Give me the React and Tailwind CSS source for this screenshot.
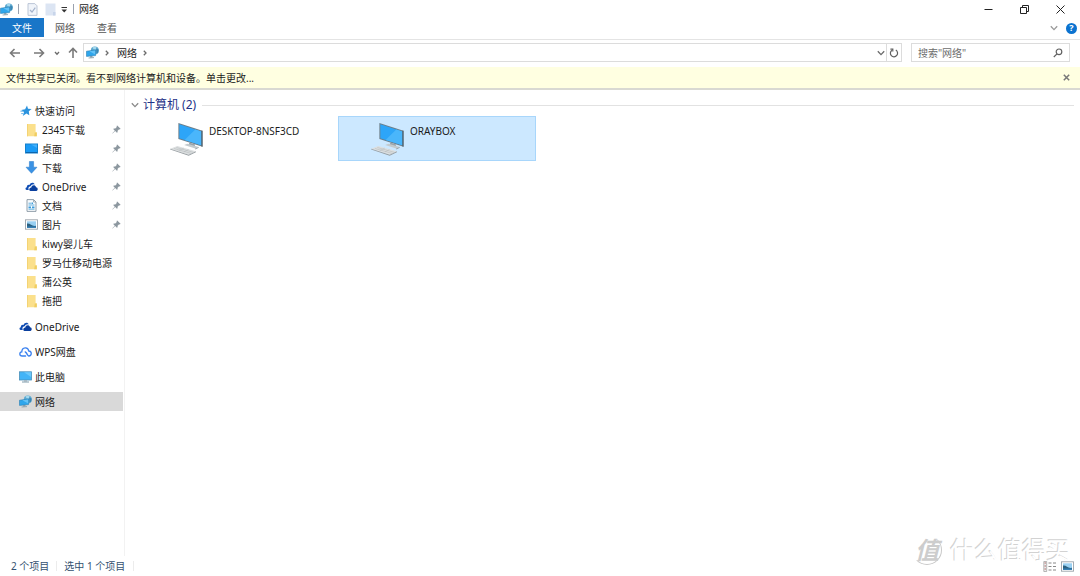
import React from "react";

const PinIcon = () => (
  <svg width="9" height="9" viewBox="0 0 9 9" aria-hidden="true">
    <path d="M5.2 0.4 8.6 3.8 7.8 4.4 7.1 4.2 5.6 5.8 5.6 7.2 4.9 7.8 3.2 6.1 0.6 8.6 0.3 8.3 2.8 5.7 1.2 4.1 1.9 3.4 3.3 3.4 4.8 1.9 4.6 1.1Z" fill="#8c979f" />
  </svg>
);

const StarIcon = () => (
  <svg width="12" height="12" viewBox="0 0 12 12" aria-hidden="true">
    <path d="M7 0.6 8 3.8 11.6 4.1 8.8 6.3 9.3 10.2 6.4 8.4 2.8 11 4 7 1.2 4.9 5.1 4.2Z" fill="#2b93de" />
    <path d="M0.4 6.2H3M1.2 8.6H3.4" stroke="#6bb6ea" strokeWidth="1" />
  </svg>
);

const FolderIcon = () => (
  <svg width="13" height="14" viewBox="0 0 13 14" aria-hidden="true">
    <path d="M2 1H10.6V9.2H11.8V13.2H2Z" fill="#fbe08c" />
    <path d="M2 1H3V13.2H2Z" fill="#f4d374" />
    <path d="M9.8 9.4H11.8V13.2H9.2Z" fill="#f0cd62" />
  </svg>
);

const DesktopIcon = () => (
  <svg width="13" height="11" viewBox="0 0 13 11" aria-hidden="true">
    <rect x="0.5" y="1" width="12" height="9" fill="#1a9af5" stroke="#1580cc" />
    <path d="M6 1.5H12V5Z" fill="#43b0fa" />
    <path d="M1 9.5H12" stroke="#0e65ac" />
  </svg>
);

const DownloadIcon = () => (
  <svg width="13" height="13" viewBox="0 0 13 13" aria-hidden="true">
    <path d="M4.4 0.5H8.6V6.2H12L6.5 12.3 1 6.2H4.4Z" fill="#3a92e4" stroke="#2679c9" strokeWidth="0.5" />
  </svg>
);

const OneDriveIcon = () => (
  <svg width="13" height="11" viewBox="0 0 13 11" aria-hidden="true">
    <path d="M1.6 9C0.1 8.8 0 6.5 1.8 6.2 1.8 4.3 3.4 3.5 4.6 4 5.3 1.4 8.8 0.9 9.8 3.4 7.6 3 6.2 4 5.7 5.3 3.6 5.1 2.9 7.5 3.8 9Z" fill="#0f4db4" />
    <path d="M5.4 9.9C3.7 9.6 3.9 6.6 6.3 6.5 6.8 3.8 10.3 3.6 11 6.3 13.2 6.4 13.2 9.6 11.4 9.9Z" fill="#0a3f9e" />
  </svg>
);

const WpsIcon = () => (
  <svg width="13" height="12" viewBox="0 0 13 12" aria-hidden="true">
    <path d="M6.6 10H3.2C0 10 0.2 6 2.8 5.8 2.9 0.6 9.3 0.6 9.7 5 13.2 5.2 13 10 9.8 10 8 9.6 8.6 7.4 6.2 5.9" fill="none" stroke="#3b82f0" strokeWidth="1.3" strokeLinecap="round" />
  </svg>
);

const DocumentIcon = () => (
  <svg width="13" height="13" viewBox="0 0 13 13" aria-hidden="true">
    <path d="M2 0.6H8.6L11 3V12.4H2Z" fill="#f8fbfd" stroke="#8795a1" strokeWidth="0.9" />
    <path d="M8.5 0.8V3H11" fill="none" stroke="#8795a1" strokeWidth="0.7" />
    <path d="M3.5 4.2H6M3.5 6H9.5M3.5 10.2H9.5" stroke="#58a8dc" strokeWidth="0.9" />
    <path d="M3.5 7.4H6V9.2H3.5ZM7 7.4H9.5V9.2H7ZM6.5 3.4H8V5H6.5Z" fill="#3b9bdb" />
  </svg>
);

const PictureIcon = () => (
  <svg width="13" height="11" viewBox="0 0 13 11" aria-hidden="true">
    <rect x="0.5" y="0.8" width="12" height="9.4" fill="#fff" stroke="#9aa3aa" strokeWidth="0.9" />
    <rect x="2" y="2.3" width="9" height="6.4" fill="#9ad0f2" />
    <path d="M2 4.6Q4 4.2 6 5.8T11 6.8V8.7H2Z" fill="#2c6180" />
    <path d="M2 7.5H11V8.7H2Z" fill="#2f80bd" />
  </svg>
);

const ThisPcIcon = () => (
  <svg width="13" height="12" viewBox="0 0 13 12" aria-hidden="true">
    <rect x="0.5" y="0.8" width="12" height="8.2" fill="#43b4f7" stroke="#4a8fb8" strokeWidth="0.8" />
    <path d="M5 1.2H12.1V6Z" fill="#6cc8fb" />
    <path d="M5 9.2H8V10.5H5Z" fill="#a6b4bd" />
    <path d="M3 11H10" stroke="#7f9bab" />
  </svg>
);

const NetworkIcon = () => (
  <svg width="13" height="13" viewBox="0 0 13 13" aria-hidden="true">
    <circle cx="8.8" cy="4.4" r="4" fill="#5fa9cf" />
    <path d="M6.4 1.6Q8.6 0.2 10.6 1.4L9.6 3.6 7.6 3.2Z" fill="#a5d9ee" />
    <path d="M10.2 2.6 12.6 3.4 12.2 6.4 10.4 7.6Z" fill="#3a86b4" />
    <path d="M0.5 5.2 9.6 4V9.6L0.5 10.4Z" fill="#2ea6ec" stroke="#2b7fb2" strokeWidth="0.6" />
    <path d="M3.4 5.2 9.2 4.4V8.4Z" fill="#62c2f7" />
    <path d="M4 10.3 6.4 10.1V11.4H4Z" fill="#7d97a6" />
    <path d="M2.6 12 8 11.6" stroke="#8ba0ad" strokeWidth="0.9" />
  </svg>
);

const ComputerIcon = () => (
  <svg width="35" height="35" viewBox="0 0 36 36" aria-hidden="true">
    <path d="M8.6 1 33.4 9V25.4L8.6 17.6Z" fill="#6c7f8b" />
    <path d="M9.6 2.4 32.2 9.8V23.8L9.6 16.8Z" fill="#2da5f8" />
    <path d="M26 7.8 32.2 9.8V23.8L15 18.5Z" fill="#4ab6fb" />
    <path d="M32.4 8.7 33.4 9V25.4L32.4 25.1Z" fill="#46525a" />
    <path d="M20 21.2 26 23.1 25 25.6 19 24Z" fill="#9ba5ab" />
    <path d="M14.5 23.6 18 22.4 29.5 25.7 26 27.3Z" fill="#c3cacd" />
    <path d="M26 27.3 29.5 25.7V26.6L26 28.2Z" fill="#929b9f" />
    <path d="M0.2 27.4 7.6 24.6 26.6 30 19.2 33.8Z" fill="#dcdfe0" />
    <path d="M0.2 27.4V28.3L19.2 34.7 26.6 31V30L19.2 33.8Z" fill="#969da1" />
    <path d="M4 27.2 22 32.4M6.5 26.2 24 31.2M9 29.4 14.2 26.9M14.2 30.9 19 28.3" stroke="#b6bbbd" strokeWidth="0.6" />
  </svg>
);

const ArrowIcon = ({ d }) => (
  <svg width="12" height="12" viewBox="0 0 12 12" fill="none" stroke="#7a7a7a" strokeWidth="1.6" aria-hidden="true">
    <path d={d} />
  </svg>
);

const Chevron = ({ d, color = "#6b6b6b" }) => (
  <svg width="8" height="8" viewBox="0 0 8 8" fill="none" stroke={color} strokeWidth="1.3" aria-hidden="true">
    <path d={d} />
  </svg>
);

const DOWN = "M0.8 2.2 4 5.6 7.2 2.2";
const SMALL_DOWN = "M2 3 4 5.2 6 3";
const RIGHT = "M2.8 1.8 5 4 2.8 6.2";

const quickAccess = [
  { label: "2345下载", Icon: FolderIcon, pinned: true },
  { label: "桌面", Icon: DesktopIcon, pinned: true },
  { label: "下载", Icon: DownloadIcon, pinned: true },
  { label: "OneDrive", Icon: OneDriveIcon, pinned: true },
  { label: "文档", Icon: DocumentIcon, pinned: true },
  { label: "图片", Icon: PictureIcon, pinned: true },
  { label: "kiwy婴儿车", Icon: FolderIcon },
  { label: "罗马仕移动电源", Icon: FolderIcon },
  { label: "蒲公英", Icon: FolderIcon },
  { label: "拖把", Icon: FolderIcon },
];

const roots = [
  { label: "OneDrive", Icon: OneDriveIcon },
  { label: "WPS网盘", Icon: WpsIcon },
  { label: "此电脑", Icon: ThisPcIcon },
  { label: "网络", Icon: NetworkIcon, active: true },
];

const computers = [
  { name: "DESKTOP-8NSF3CD" },
  { name: "ORAYBOX", selected: true },
];

const TitleBar = () => (
  <header className="flex h-[18px] items-center justify-between">
    <div className="flex items-center">
      <NetworkIcon />
      <span className="ml-[5px] h-2.5 w-px bg-gray-400" />
      <button aria-label="属性" className="ml-2">
        <svg width="11" height="13" viewBox="0 0 11 13">
          <path d="M1 0.6H7.8L10 2.8V12.4H1Z" fill="#f0f4fa" stroke="#b5c1d2" strokeWidth="0.9" />
          <path d="M3 7 5 9 8.3 4.6" fill="none" stroke="#a3b2cb" strokeWidth="1.2" />
        </svg>
      </button>
      <button aria-label="新建文件夹" className="ml-[7px]">
        <svg width="11" height="13" viewBox="0 0 11 13">
          <path d="M0.5 0.5H10.5V12.5H0.5Z" fill="#dce5f3" />
          <path d="M8 9H10.5V12.5H8Z" fill="#c8d5ea" />
        </svg>
      </button>
      <button aria-label="自定义快速访问工具栏" className="ml-1">
        <svg width="8" height="8" viewBox="0 0 8 8">
          <path d="M1.5 2.5H7" stroke="#333" />
          <path d="M1.5 4.4H7L4.2 7.4Z" fill="#333" />
        </svg>
      </button>
      <span className="ml-[5px] h-2.5 w-px bg-gray-400" />
      <h1 className="ml-[5px]">网络</h1>
    </div>
    <div className="flex pr-0.5">
      <button aria-label="最小化" className="flex h-4 w-9 items-center justify-center">
        <svg width="9" height="9" viewBox="0 0 9 9">
          <path d="M0.5 4.5H8.5" stroke="#222" />
        </svg>
      </button>
      <button aria-label="还原" className="flex h-4 w-9 items-center justify-center">
        <svg width="9" height="9" viewBox="0 0 9 9" fill="none" stroke="#222">
          <path d="M0.5 2.5H6.5V8.5H0.5ZM2.5 2.5V0.5H8.5V6.5H6.5" />
        </svg>
      </button>
      <button aria-label="关闭" className="flex h-4 w-9 items-center justify-center">
        <svg width="9" height="9" viewBox="0 0 9 9" stroke="#222">
          <path d="M0.5 0.5 8.5 8.5M8.5 0.5 0.5 8.5" />
        </svg>
      </button>
    </div>
  </header>
);

const Ribbon = () => (
  <nav className="flex h-[22px] items-start justify-between border-b border-[#e4e4e4]">
    <div className="flex h-[19px]">
      <button className="w-11 bg-[#1976c8] text-white">文件</button>
      <button className="w-[42px] text-[#555]">网络</button>
      <button className="w-[42px] text-[#555]">查看</button>
    </div>
    <div className="flex h-5 items-center gap-2 pr-[3px]">
      <button aria-label="展开功能区">
        <Chevron d={DOWN} color="#9a9a9a" />
      </button>
      <button
        aria-label="帮助"
        className="flex size-[11px] items-center justify-center rounded-full bg-[#0b73d0] text-[9px] font-bold text-white"
      >
        ?
      </button>
    </div>
  </nav>
);

const AddressRow = () => (
  <div className="flex items-center pt-[3px] pr-[10px] pb-[5px] pl-[9px]">
    <div className="flex w-[74px] items-center">
      <button aria-label="返回">
        <ArrowIcon d="M11 6H1.5M5.5 2 1.5 6 5.5 10" />
      </button>
      <button aria-label="前进" className="ml-3">
        <ArrowIcon d="M1 6H10.5M6.5 2 10.5 6 6.5 10" />
      </button>
      <button aria-label="最近浏览的位置" className="ml-2">
        <Chevron d={SMALL_DOWN} />
      </button>
      <button aria-label="上移" className="ml-1.5">
        <ArrowIcon d="M6 11V1.5M2 5.5 6 1.5 10 5.5" />
      </button>
    </div>
    <div className="flex h-[19px] flex-1 items-center border border-[#dcdcdc]">
      <span className="ml-0.5">
        <NetworkIcon />
      </span>
      <span className="ml-1">
        <Chevron d={RIGHT} />
      </span>
      <button className="ml-1.5">网络</button>
      <span className="ml-1">
        <Chevron d={RIGHT} />
      </span>
      <button aria-label="以前的位置" className="mr-px ml-auto">
        <Chevron d={DOWN} />
      </button>
      <button aria-label="刷新" className="flex h-full w-[15px] items-center justify-center border-l border-[#dcdcdc]">
        <svg width="10" height="10" viewBox="0 0 10 10" fill="none" stroke="#606060" strokeWidth="1.2">
          <path d="M6.8 2.1A3.6 3.6 0 1 1 3 2.2" />
          <path d="M1.4 1.1H3.8V3.5" />
        </svg>
      </button>
    </div>
    <label className="ml-[9px] flex h-[19px] w-[159px] items-center border border-[#dcdcdc] px-1.5">
      <input
        type="text"
        aria-label="搜索网络"
        placeholder={'搜索"网络"'}
        className="min-w-0 flex-1 bg-transparent outline-none placeholder:text-[#6d6d6d]"
      />
      <svg width="10" height="10" viewBox="0 0 10 10" fill="none" stroke="#606060" strokeWidth="1.2" aria-hidden="true">
        <circle cx="6" cy="3.8" r="2.8" />
        <path d="M4 5.8 0.8 9" />
      </svg>
    </label>
  </div>
);

const Sidebar = () => (
  <aside className="w-[125px] shrink-0 border-r border-[#f2f2f2] pt-[11px]">
    <a href="#quick" className="flex h-[19px] items-center gap-[3px] pl-5">
      <StarIcon />
      快速访问
    </a>
    <ul className="mb-[7px]">
      {quickAccess.map(({ label, Icon, pinned }) => (
        <li key={label}>
          <a href="#folder" className="flex h-[19px] items-center pr-[3px] pl-[25px] whitespace-nowrap">
            <Icon />
            <span className="ml-1">{label}</span>
            {pinned && (
              <span className="ml-auto">
                <PinIcon />
              </span>
            )}
          </a>
        </li>
      ))}
    </ul>
    <ul className="flex flex-col gap-1.5">
      {roots.map(({ label, Icon, active }) => (
        <li key={label}>
          <a
            href="#root"
            className={`mr-px flex h-[19px] items-center gap-[3px] pl-[19px] ${active ? "bg-[#d9d9d9]" : ""}`}
          >
            <Icon />
            {label}
          </a>
        </li>
      ))}
    </ul>
  </aside>
);

const Watermark = () => (
  <div className="pointer-events-none absolute right-2.5 bottom-2.5 flex items-center gap-2 text-2xl leading-8">
    <span className="flex size-[30px] items-center justify-center rounded-full border border-t-transparent border-l-transparent border-[#c8c8c8] font-bold text-[#cdcdcd] italic">
      值
    </span>
    <span className="text-white [text-shadow:-1px_-1px_0_#d2d2d2]">什么值得买</span>
  </div>
);

const App = () => {
  return (
    <div className="relative flex min-h-screen flex-col bg-white font-['Noto_Sans','Noto_Sans_CJK_SC',sans-serif] text-[10px] leading-[14px] text-[#1b1b1b]">
      <TitleBar />
      <Ribbon />
      <AddressRow />

      {/* Network discovery notice */}
      <div className="flex h-[23px] items-center justify-between border-b-2 border-[#d9d9d2] bg-[#ffffe1] pr-2.5 pl-1.5">
        <button>文件共享已关闭。看不到网络计算机和设备。单击更改...</button>
        <button aria-label="关闭通知">
          <svg width="7" height="7" viewBox="0 0 7 7" stroke="#777" strokeWidth="1.5">
            <path d="M0.8 0.8 6.2 6.2M6.2 0.8 0.8 6.2" />
          </svg>
        </button>
      </div>

      <div className="flex flex-1">
        <Sidebar />
        <main className="flex-1 px-1.5 pt-[7px]">
          <h2 className="flex h-4 items-center text-xs text-[#1e3287]">
            <button className="flex items-center gap-1">
              <Chevron d={DOWN} color="#8a8a8a" />
              计算机 (2)
            </button>
            <span className="ml-1.5 h-px flex-1 bg-[#e2e2e2]" />
          </h2>
          <div className="mt-[3px] flex flex-wrap gap-[3px] pl-1.5">
            {computers.map((pc) => (
              <button
                key={pc.name}
                className={`flex h-[45px] w-[198px] items-start border pt-[5px] pl-8 text-left ${
                  pc.selected ? "border-[#a8d6fb] bg-[#cce8ff]" : "border-transparent"
                }`}
              >
                <ComputerIcon />
                <span className="ml-1 pt-0.5">{pc.name}</span>
              </button>
            ))}
          </div>
        </main>
      </div>

      <footer className="flex h-5 items-center pr-1.5 pl-[11px] text-[#34516f]">
        <span>2 个项目</span>
        <span className="mx-[7px] h-2.5 w-px bg-[#ececec]" />
        <span>选中 1 个项目</span>
        <span className="ml-2 h-2.5 w-px bg-[#ececec]" />
        <div className="z-10 ml-auto flex gap-1">
          <button aria-label="详细信息">
            <svg width="14" height="11" viewBox="0 0 14 11">
              <path d="M0.8 0.5H3.7V10.5H0.8Z" fill="#eee" stroke="#999" strokeWidth="0.7" />
              <path d="M1.5 2H3M1.5 5H3M1.5 8H3" stroke="#b06a6a" />
              <path d="M5.5 2H8.5M10 2H13M5.5 5.5H8.5M10 5.5H13M5.5 9H8.5M10 9H13" stroke="#888" />
            </svg>
          </button>
          <button aria-label="大图标">
            <PictureIcon />
          </button>
        </div>
      </footer>

      <Watermark />
    </div>
  );
};

export default App;
